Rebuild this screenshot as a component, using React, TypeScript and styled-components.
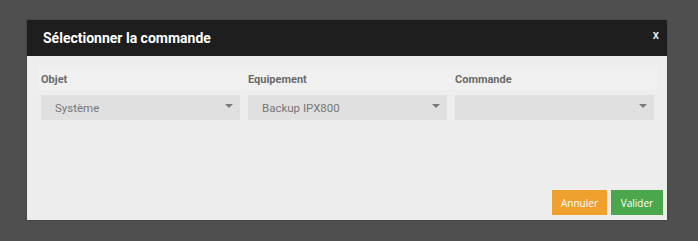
import React from 'react';
import styled, { createGlobalStyle } from 'styled-components';

// Global page setup
const GlobalStyle = createGlobalStyle`
    html, body {
        margin: 0;
        padding: 0;
        background: #4f4f4f;
        font-family: Roboto, "Liberation Sans", sans-serif;
    }
`;

const Page = styled.div`
    width: 698px;
    height: 241px;
    padding: 20px 0 0 27px;
    box-sizing: border-box;
`;

const Dialog = styled.div`
    width: 640px;
    height: 200px;
    display: flex;
    flex-direction: column;
    background: #ededed;
    box-shadow: 0 0 2px rgba(0, 0, 0, 0.3);
`;

const Header = styled.div`
    height: 36px;
    display: flex;
    align-items: center;
    justify-content: space-between;
    padding: 0 8px 0 16px;
    background: #1e1e1e;
    color: #fff;
`;

const Title = styled.h3`
    margin: 0;
    font-size: 14px;
    font-weight: 700;
`;

const Close = styled.span`
    align-self: flex-start;
    margin-top: 7px;
    font-size: 12.5px;
    font-weight: 500;
    color: #eee;
`;

const Body = styled.div`
    flex: 1;
    padding: 9px 10px 0 10px;
`;

const FormRow = styled.div`
    display: grid;
    grid-template-columns: 199px 199px 199px;
    column-gap: 8px;
    padding: 0 4px;
    background: linear-gradient(#f0f0f0, #f0f0f0) no-repeat;
    background-size: 100% 25px;
    background-position: 0 0;
`;

const Field = styled.div`
    display: flex;
    flex-direction: column;
`;

const Label = styled.label`
    height: 30px;
    display: flex;
    align-items: center;
    padding-bottom: 2px;
    box-sizing: border-box;
    font-size: 11px;
    font-weight: 700;
    color: #6b6b6b;
`;

const Select = styled.div`
    height: 25px;
    display: flex;
    align-items: center;
    justify-content: space-between;
    padding: 0 7px 0 14px;
    background: #e0e0e0;
    font-size: 11.5px;
    color: #777;
`;

const Arrow = styled.span`
    width: 0;
    height: 0;
    margin-bottom: 3px;
    border-left: 4.5px solid transparent;
    border-right: 4.5px solid transparent;
    border-top: 4.5px solid #7a7a7a;
`;

const Footer = styled.div`
    display: flex;
    justify-content: flex-end;
    gap: 4px;
    padding: 0 4px 5px 0;
`;

const Button = styled.button<{ $variant: 'warning' | 'success' }>`
    height: 25px;
    border: none;
    padding: 0 9px;
    color: #fff;
    font-family: "Open Sans", "Liberation Sans", sans-serif;
    font-size: 10px;
    background: ${props => (props.$variant === 'warning' ? '#f0a02c' : '#4ba74b')};
`;

const fields = [
    { label: 'Objet', value: 'Système' },
    { label: 'Equipement', value: 'Backup IPX800' },
    { label: 'Commande', value: '' },
];

const App: React.FC = (): React.ReactElement => {
    return (
        <>
            <GlobalStyle />
            <Page>
                <Dialog>
                    <Header>
                        <Title>Sélectionner la commande</Title>
                        <Close>x</Close>
                    </Header>
                    <Body>
                        <FormRow>
                            {fields.map(f => (
                                <Field key={f.label}>
                                    <Label>{f.label}</Label>
                                    <Select>
                                        <span>{f.value}</span>
                                        <Arrow />
                                    </Select>
                                </Field>
                            ))}
                        </FormRow>
                    </Body>
                    <Footer>
                        <Button $variant="warning" style={{ width: 55 }}>Annuler</Button>
                        <Button $variant="success" style={{ width: 52 }}>Valider</Button>
                    </Footer>
                </Dialog>
            </Page>
        </>
    );
};

export default App;
